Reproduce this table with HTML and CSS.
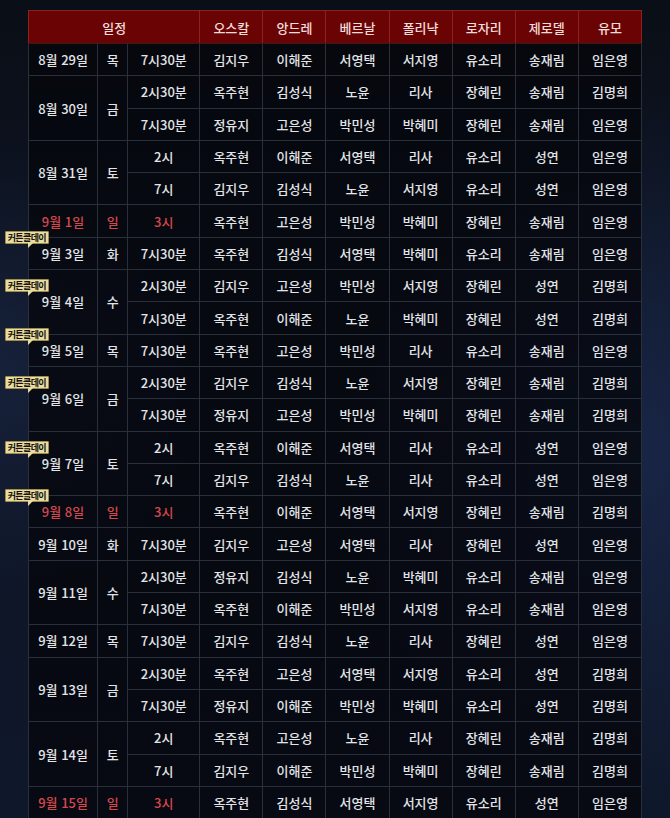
FILE: index.html
```html
<!DOCTYPE html>
<html lang="ko">
<head>
<meta charset="utf-8">
<title>일정</title>
<link rel="stylesheet" href="styles.css">
</head>
<body>
<table class="schedule">
  <colgroup>
    <col class="c-date"><col class="c-day"><col class="c-time">
    <col class="c-cast"><col class="c-cast"><col class="c-cast"><col class="c-cast"><col class="c-cast"><col class="c-cast"><col class="c-cast">
  </colgroup>
  <thead>
    <tr><th colspan="3">일정</th><th>오스칼</th><th>앙드레</th><th>베르날</th><th>폴리냑</th><th>로자리</th><th>제로델</th><th>유모</th></tr>
  </thead>
  <tbody>
    <tr><td>8월 29일</td><td>목</td><td>7시30분</td><td>김지우</td><td>이해준</td><td>서영택</td><td>서지영</td><td>유소리</td><td>송재림</td><td>임은영</td></tr>
    <tr><td rowspan="2">8월 30일</td><td rowspan="2">금</td><td>2시30분</td><td>옥주현</td><td>김성식</td><td>노윤</td><td>리사</td><td>장혜린</td><td>송재림</td><td>김명희</td></tr>
    <tr><td>7시30분</td><td>정유지</td><td>고은성</td><td>박민성</td><td>박혜미</td><td>장혜린</td><td>송재림</td><td>임은영</td></tr>
    <tr><td rowspan="2">8월 31일</td><td rowspan="2">토</td><td>2시</td><td>옥주현</td><td>이해준</td><td>서영택</td><td>리사</td><td>유소리</td><td>성연</td><td>임은영</td></tr>
    <tr><td>7시</td><td>김지우</td><td>김성식</td><td>노윤</td><td>서지영</td><td>유소리</td><td>성연</td><td>임은영</td></tr>
    <tr><td class="red">9월 1일</td><td class="red">일</td><td class="red">3시</td><td>옥주현</td><td>고은성</td><td>박민성</td><td>박혜미</td><td>장혜린</td><td>송재림</td><td>임은영</td></tr>
    <tr><td><span class="dw"><span class="badge">커튼콜데이</span>9월 3일</span></td><td>화</td><td>7시30분</td><td>옥주현</td><td>김성식</td><td>서영택</td><td>박혜미</td><td>유소리</td><td>송재림</td><td>임은영</td></tr>
    <tr><td rowspan="2"><span class="dw"><span class="badge">커튼콜데이</span>9월 4일</span></td><td rowspan="2">수</td><td>2시30분</td><td>김지우</td><td>고은성</td><td>박민성</td><td>서지영</td><td>장혜린</td><td>성연</td><td>김명희</td></tr>
    <tr><td>7시30분</td><td>옥주현</td><td>이해준</td><td>노윤</td><td>박혜미</td><td>장혜린</td><td>성연</td><td>김명희</td></tr>
    <tr><td><span class="dw"><span class="badge">커튼콜데이</span>9월 5일</span></td><td>목</td><td>7시30분</td><td>옥주현</td><td>고은성</td><td>박민성</td><td>리사</td><td>유소리</td><td>송재림</td><td>임은영</td></tr>
    <tr><td rowspan="2"><span class="dw"><span class="badge">커튼콜데이</span>9월 6일</span></td><td rowspan="2">금</td><td>2시30분</td><td>김지우</td><td>김성식</td><td>노윤</td><td>서지영</td><td>장혜린</td><td>송재림</td><td>김명희</td></tr>
    <tr><td>7시30분</td><td>정유지</td><td>고은성</td><td>박민성</td><td>박혜미</td><td>장혜린</td><td>송재림</td><td>김명희</td></tr>
    <tr><td rowspan="2"><span class="dw"><span class="badge">커튼콜데이</span>9월 7일</span></td><td rowspan="2">토</td><td>2시</td><td>옥주현</td><td>이해준</td><td>서영택</td><td>리사</td><td>유소리</td><td>성연</td><td>임은영</td></tr>
    <tr><td>7시</td><td>김지우</td><td>김성식</td><td>노윤</td><td>리사</td><td>유소리</td><td>성연</td><td>임은영</td></tr>
    <tr><td class="red"><span class="dw"><span class="badge">커튼콜데이</span>9월 8일</span></td><td class="red">일</td><td class="red">3시</td><td>옥주현</td><td>이해준</td><td>서영택</td><td>서지영</td><td>장혜린</td><td>송재림</td><td>김명희</td></tr>
    <tr><td>9월 10일</td><td>화</td><td>7시30분</td><td>김지우</td><td>고은성</td><td>서영택</td><td>리사</td><td>장혜린</td><td>성연</td><td>임은영</td></tr>
    <tr><td rowspan="2">9월 11일</td><td rowspan="2">수</td><td>2시30분</td><td>정유지</td><td>김성식</td><td>노윤</td><td>박혜미</td><td>유소리</td><td>송재림</td><td>임은영</td></tr>
    <tr><td>7시30분</td><td>옥주현</td><td>이해준</td><td>박민성</td><td>서지영</td><td>유소리</td><td>송재림</td><td>임은영</td></tr>
    <tr><td>9월 12일</td><td>목</td><td>7시30분</td><td>김지우</td><td>김성식</td><td>노윤</td><td>리사</td><td>장혜린</td><td>성연</td><td>임은영</td></tr>
    <tr><td rowspan="2">9월 13일</td><td rowspan="2">금</td><td>2시30분</td><td>옥주현</td><td>고은성</td><td>서영택</td><td>서지영</td><td>유소리</td><td>성연</td><td>김명희</td></tr>
    <tr><td>7시30분</td><td>정유지</td><td>이해준</td><td>박민성</td><td>박혜미</td><td>유소리</td><td>성연</td><td>김명희</td></tr>
    <tr><td rowspan="2">9월 14일</td><td rowspan="2">토</td><td>2시</td><td>옥주현</td><td>고은성</td><td>노윤</td><td>리사</td><td>장혜린</td><td>송재림</td><td>김명희</td></tr>
    <tr><td>7시</td><td>김지우</td><td>이해준</td><td>박민성</td><td>박혜미</td><td>장혜린</td><td>송재림</td><td>김명희</td></tr>
    <tr><td class="red">9월 15일</td><td class="red">일</td><td class="red">3시</td><td>옥주현</td><td>김성식</td><td>서영택</td><td>서지영</td><td>유소리</td><td>성연</td><td>임은영</td></tr>
  </tbody>
</table>
</body>
</html>
```

FILE: styles.css
```css
html, body {
  margin: 0;
  padding: 0;
}
body {
  min-height: 818px;
  background-color: #0d1422;
  background-image:
    radial-gradient(ellipse 420px 520px at 95% 55%, rgba(32, 50, 94, 0.55), rgba(32, 50, 94, 0) 70%),
    radial-gradient(ellipse 300px 320px at 0% 45%, rgba(30, 44, 76, 0.5), rgba(30, 44, 76, 0) 70%),
    linear-gradient(180deg, #0a0e16 0%, #0e1526 40%, #0f172a 100%);
  font-family: "Noto Sans CJK KR", "Noto Sans", sans-serif;
  overflow: hidden;
}
.schedule {
  margin: 10px auto 0;
  width: 614px;
  table-layout: fixed;
  border-collapse: collapse;
  font-size: 13px;
  font-weight: 500;
  color: #e2e4e8;
  text-align: center;
}
.c-date { width: 69px; }
.c-day { width: 30px; }
.c-time { width: 72px; }
.c-cast { width: 63px; }

.schedule th {
  height: 32px;
  padding: 0;
  background: #6a0404;
  color: #f2dcdc;
  font-weight: 500;
  border: 1px solid #8a2222;
  border-bottom-color: #3a1a1e;
}
.schedule tbody tr {
  height: 32.3px;
}
.schedule td {
  padding: 0;
  background: rgba(5, 7, 12, 0.78);
  border: 1px solid #2a2f3c;
  white-space: nowrap;
}
.schedule td.red {
  color: #d6474c;
}
.dw {
  position: relative;
  display: inline-block;
}
.badge {
  position: absolute;
  left: -37px;
  top: -13px;
  width: 44px;
  height: 13px;
  box-sizing: border-box;
  background: #e9dca2;
  border: 1px solid #9e8c4c;
  color: #15130a;
  font-size: 9px;
  line-height: 11px;
  font-weight: 700;
  letter-spacing: -0.6px;
  text-align: center;
  border-radius: 1px;
  z-index: 2;
}
.badge::after {
  content: "";
  position: absolute;
  left: 22px;
  top: 11px;
  width: 0;
  height: 0;
  border-left: 5px solid #e9dca2;
  border-bottom: 5px solid transparent;
}
```
